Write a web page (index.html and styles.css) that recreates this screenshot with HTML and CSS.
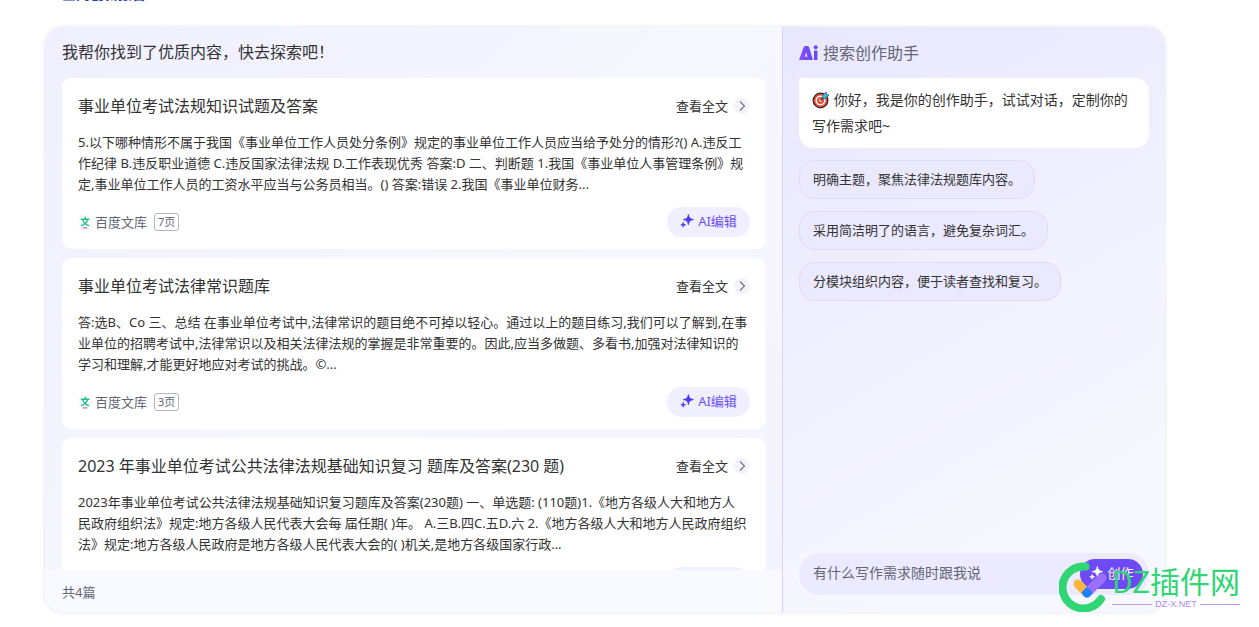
FILE: index.html
```
<!DOCTYPE html>
<html lang="zh-CN">
<head>
<meta charset="utf-8">
<title>搜索创作助手</title>
<link rel="stylesheet" href="styles.css">
</head>
<body>
<svg class="sprite" aria-hidden="true">
  <symbol id="sparkle" viewBox="0 0 14 14"><path d="M8.4 0.6C8.9 3.8 9.9 5 13.4 5.6C9.9 6.2 8.9 7.400 8.400 10.600C7.900 7.400 6.900 6.200 3.400 5.600C6.900 5 7.900 3.800 8.400 0.600Z" fill="currentColor" stroke="currentColor" stroke-width="1" stroke-linejoin="round"/><path d="M3.200 8.400C3.500 10 4.100 10.500 5.600 10.800C4.100 11.100 3.500 11.600 3.200 13.200C2.900 11.600 2.300 11.100 0.800 10.800C2.300 10.500 2.900 10 3.200 8.400Z" fill="currentColor" stroke="currentColor" stroke-width=".8" stroke-linejoin="round"/></symbol>
  <symbol id="chevron" viewBox="0 0 16 16"><circle cx="8" cy="8" r="8" fill="#f3f4fa"/><path d="M6 3.500L10.500 8L6 12.500" fill="none" stroke="#6f7488" stroke-width="1.200"/></symbol>
  <symbol id="wenku" viewBox="0 0 14 14"><circle cx="7" cy="7" r="6.500" fill="#fff" stroke="#eeeef3" stroke-width=".7"/><path d="M7 1.800L7.600 3.600M2.800 4.200H11.400M9.600 4.400C8.800 7.600 6.500 9.800 3 10.800M4.700 4.600C5.500 7.600 7.600 9.800 11.300 10.600" fill="none" stroke="#1fbd87" stroke-width="1.400"/><path d="M4.700 12.900H7" stroke="#e34b55"/><path d="M7 12.900H9.300" stroke="#5367e8"/></symbol>
</svg>
<h2 class="cut-title"><a href="#">全网创新报告</a></h2>
<main class="panel">
  <section class="results">
    <h1 class="results-title">我帮你找到了优质内容，快去探索吧！</h1>
    <div class="cards">
      <article class="card">
        <header class="card-head"><h2>事业单位考试法规知识试题及答案</h2><a class="more" href="#">查看全文<svg><use href="#chevron"/></svg></a></header>
        <p class="excerpt">5.以下哪种情形不属于我国《事业单位工作人员处分条例》规定的事业单位工作人员应当给予处分的情形?() A.违反工<br>作纪律 B.违反职业道德 C.违反国家法律法规 D.工作表现优秀 答案:D 二、判断题 1.我国《事业单位人事管理条例》规<br>定,事业单位工作人员的工资水平应当与公务员相当。() 答案:错误 2.我国《事业单位财务...</p>
        <footer class="card-foot"><svg class="source-icon"><use href="#wenku"/></svg><span class="source">百度文库</span><span class="pages">7页</span><button class="edit" type="button"><svg><use href="#sparkle"/></svg>AI编辑</button></footer>
      </article>
      <article class="card">
        <header class="card-head"><h2>事业单位考试法律常识题库</h2><a class="more" href="#">查看全文<svg><use href="#chevron"/></svg></a></header>
        <p class="excerpt">答:选B、Co 三、总结 在事业单位考试中,法律常识的题目绝不可掉以轻心。通过以上的题目练习,我们可以了解到,在事<br>业单位的招聘考试中,法律常识以及相关法律法规的掌握是非常重要的。因此,应当多做题、多看书,加强对法律知识的<br>学习和理解,才能更好地应对考试的挑战。©...</p>
        <footer class="card-foot"><svg class="source-icon"><use href="#wenku"/></svg><span class="source">百度文库</span><span class="pages">3页</span><button class="edit" type="button"><svg><use href="#sparkle"/></svg>AI编辑</button></footer>
      </article>
      <article class="card">
        <header class="card-head"><h2>2023 年事业单位考试公共法律法规基础知识复习 题库及答案(230 题)</h2><a class="more" href="#">查看全文<svg><use href="#chevron"/></svg></a></header>
        <p class="excerpt">2023年事业单位考试公共法律法规基础知识复习题库及答案(230题) 一、单选题: (110题)1.《地方各级人大和地方人<br>民政府组织法》规定:地方各级人民代表大会每 届任期( )年。 A.三B.四C.五D.六 2.《地方各级人大和地方人民政府组织<br>法》规定:地方各级人民政府是地方各级人民代表大会的( )机关,是地方各级国家行政...</p>
        <footer class="card-foot"><svg class="source-icon"><use href="#wenku"/></svg><span class="source">百度文库</span><button class="edit" type="button"><svg><use href="#sparkle"/></svg>AI编辑</button></footer>
      </article>
    </div>
    <footer class="total">共4篇</footer>
  </section>
  <aside class="assistant">
    <h2 class="assistant-title"><svg class="ai-logo" viewBox="0 0 20 16" role="img" aria-label="Ai"><defs><linearGradient id="ai" x2="1"><stop stop-color="#8a4dff"/><stop offset="1" stop-color="#6549f5"/></linearGradient></defs><path d="M0 15L4.600 2.200Q5.100 1 6.400 1H8.300Q9.600 1 10.100 2.200L14 15H9.300L7.200 7.200L5.800 11.800H8.400L9.200 15Z" fill="url(#ai)"/><path d="M16.700 5.400V15" stroke="#6549f5" stroke-width="3.400"/><circle cx="16.700" cy="2.300" r="2" fill="#6549f5"/></svg>搜索创作助手</h2>
    <p class="greeting"><svg class="target" viewBox="0 0 18 18" aria-hidden="true"><circle cx="8.500" cy="9.500" r="7.300" fill="#ee4a32" stroke="#33272a" stroke-width="1.300"/><circle cx="8.500" cy="9.500" r="4.300" fill="none" stroke="#fff" stroke-width="1.500"/><circle cx="8.500" cy="9.500" r="1.300" fill="#fff"/><path d="M8.500 9.500L13 5" stroke="#254252" stroke-width="1.300"/><path d="M10.500 7.500V4.500L14 1L14.600 3.500L17 4L13.500 7.500Z" fill="#36b9e9" stroke="#254252" stroke-width=".6"/></svg> 你好，我是你的创作助手，试试对话，定制你的写作需求吧~</p>
    <button class="chip" type="button">明确主题，聚焦法律法规题库内容。</button>
    <button class="chip" type="button">采用简洁明了的语言，避免复杂词汇。</button>
    <button class="chip" type="button">分模块组织内容，便于读者查找和复习。</button>
    <form class="composer"><input type="text" aria-label="写作需求" placeholder="有什么写作需求随时跟我说"><button class="create" type="button"><svg><use href="#sparkle"/></svg>创作</button></form>
  </aside>
</main>
<div class="watermark">
  <svg class="mark" viewBox="0 0 50 52" aria-hidden="true"><path d="M26.500 6.500A21 21 0 1 0 42 39" fill="none" stroke="#2fd673" stroke-width="8" stroke-linecap="round"/><path d="M19 24L27 32" stroke="#ffb63b" stroke-width="9" stroke-linecap="round"/><path d="M28 33L43 18" stroke="#9a70ff" stroke-width="9" stroke-linecap="round"/><path d="M28 27L33.500 32.500L31 36Q28 39 25 36L22.500 32.500Z" fill="#1684ff"/></svg>
  <div class="brand"><span class="brand-name">DZ插件网</span><span class="brand-url">DZ-X.NET</span></div>
</div>
</body>
</html>
```
FILE: styles.css
```
* { box-sizing: border-box; }
html, body { margin: 0; height: 100%; }
body {
  display: flex;
  flex-direction: column;
  position: relative;
  overflow: hidden;
  padding: 0 94px 15px 45px;
  background: #fff;
  color: #333;
  font: 13px/21px "Noto Sans", "Noto Sans CJK SC", sans-serif;
}
h1, h2, p { margin: 0; font-weight: 400; }
button, input { font: inherit; border: 0; }
a { color: inherit; text-decoration: none; }
.sprite { display: none; }
.cut-title {
  display: flex;
  align-items: flex-end;
  flex: none;
  height: 2px;
  margin: 0 0 25px 17px;
  overflow: hidden;
  color: #2440b3;
  font-size: 14px;
  font-weight: 700;
  line-height: 16px;
}
.panel {
  flex: 1;
  min-height: 0;
  display: flex;
  overflow: hidden;
  border-radius: 18px;
  box-shadow: 0 0 4px rgba(0, 0, 0, .12);
}
.results {
  flex: 1;
  min-width: 0;
  display: flex;
  flex-direction: column;
  background: linear-gradient(135deg, #f0efff, #f6f7ff 50%, #f3f3ff);
}
.results-title { flex: none; padding: 13px 17px 14px; font-size: 16px; line-height: 24px; }
.cards {
  flex: 1;
  min-height: 0;
  display: flex;
  flex-direction: column;
  gap: 9px;
  padding: 0 16px 0 17px;
  overflow: hidden;
}
.card { flex: none; padding: 16px 16px 12px; border-radius: 9px; background: #fff; }
.card-head { display: flex; justify-content: space-between; align-items: center; }
.card-head h2 { font-size: 16px; line-height: 24px; white-space: nowrap; }
.more { display: flex; align-items: center; gap: 6px; }
.more svg { width: 16px; height: 16px; }
.excerpt { margin: 14px 0 12px; white-space: nowrap; }
.card-foot { display: flex; align-items: center; color: #626675; }
.source-icon { width: 14px; height: 14px; margin-right: 3px; }
.pages {
  margin-left: 7px;
  padding: 0 3px;
  border: 1px solid #b4b5c0;
  border-radius: 3px;
  font-size: 11px;
  line-height: 16px;
}
.edit, .create { display: flex; align-items: center; justify-content: center; gap: 4px; height: 30px; border-radius: 15px; }
.edit { width: 83px; margin-left: auto; padding: 0 0 2px; background: #f0efff; color: #6b50f6; }
.edit svg, .create svg { width: 14px; height: 14px; color: #4e3df5; }
.total { flex: none; padding: 12px 17px 9px; background: #f9faff; color: #626675; }
.assistant {
  width: 383px;
  display: flex;
  flex-direction: column;
  align-items: flex-start;
  padding: 14px 16px 17px;
  border-left: 1px solid #d7d1fd;
  background: linear-gradient(150deg, #e9e7fd, #f1f0ff 45%, #f7f7ff 80%);
}
.assistant-title { display: flex; align-items: center; gap: 4px; color: #626675; font-size: 16px; line-height: 24px; }
.ai-logo { width: 20px; height: 16px; }
.greeting {
  align-self: stretch;
  margin: 13px 0 12px;
  padding: 9px 12px 9px 13px;
  border-radius: 3px 14px 14px;
  background: #fff;
  font-size: 14px;
  line-height: 26px;
}
.target { width: 18px; height: 18px; vertical-align: -4px; }
.chip {
  height: 39px;
  margin-bottom: 12px;
  padding: 0 13px;
  border: 1px solid #dedafc;
  border-radius: 16px;
  background: #ebe9fd;
  color: #333;
}
.composer {
  align-self: stretch;
  display: flex;
  align-items: center;
  margin-top: auto;
  height: 42px;
  padding: 0 6px 0 14px;
  border-radius: 21px;
  background: #eceaff;
}
.composer input { flex: 1; min-width: 0; padding: 0 0 3px; background: none; font-size: 14px; outline: 0; }
.composer input::placeholder { color: #626675; opacity: 1; }
.create { width: 63px; padding: 0 0 2px; background: #6c4bf6; color: #fff; }
.create svg { color: #fff; }
.watermark { position: absolute; right: 19px; bottom: 15px; display: flex; align-items: flex-end; gap: 3px; }
.mark { width: 50px; height: 52px; }
.brand { display: flex; flex-direction: column; padding-bottom: 2px; color: #2fd673; }
.brand-name { font: 400 30px/36px "Noto Sans CJK SC", sans-serif; white-space: nowrap; }
.brand-url { display: flex; align-items: center; gap: 3px; color: #ab8bee; font: 9px/12px "Liberation Sans", sans-serif; }
.brand-url::before, .brand-url::after { content: ""; flex: 1; height: 1px; background: #b99af5; }
```
